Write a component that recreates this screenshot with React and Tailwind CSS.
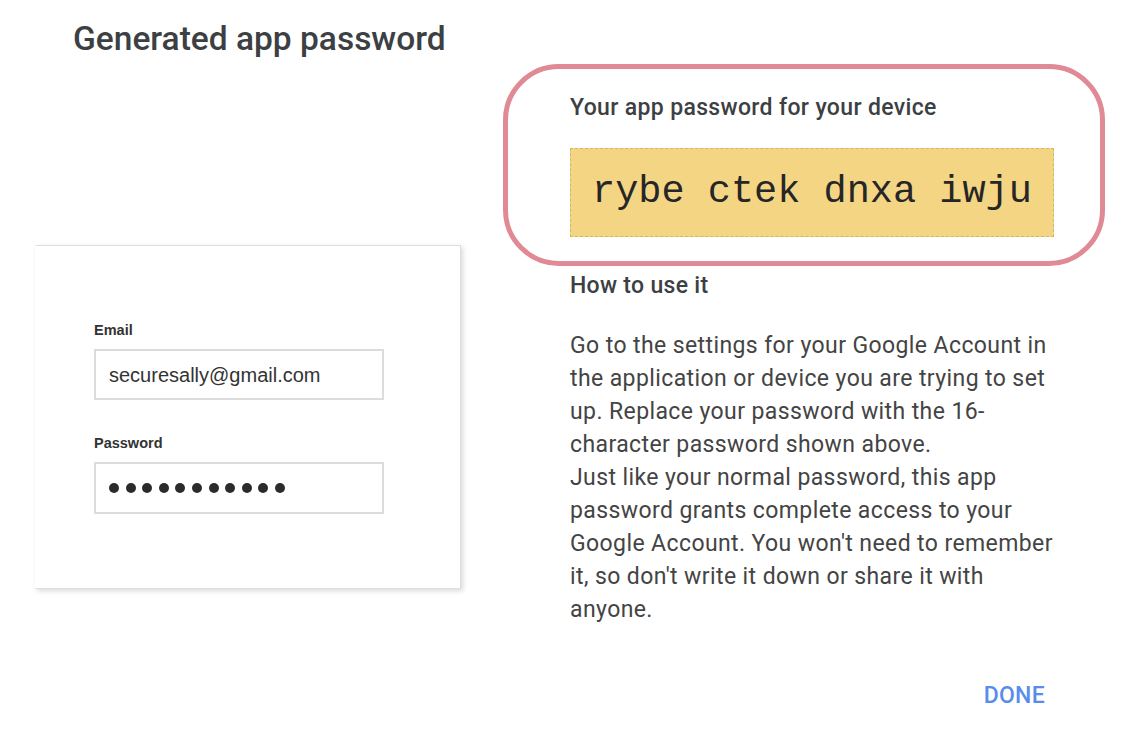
import React from 'react'

function Dots({ count }) {
  return (
    <div className="flex items-center gap-[6.6px]">
      {Array.from({ length: count }).map((_, i) => (
        <span key={i} className="block w-[10px] h-[10px] rounded-full bg-[#2b2b2b]" />
      ))}
    </div>
  )
}

export default function App() {
  return (
    <div className="w-[1132px] h-[734px] overflow-hidden bg-white pt-[19px] font-['Roboto',sans-serif] text-[#3c4043]">
      <h1 className="ml-[73px] text-[33.5px] leading-[40px] font-medium">
        Generated app password
      </h1>

      <div className="flex mt-[5px]">
        {/* sample sign-in card */}
        <div className="ml-[35px] mt-[181px] w-[426px] h-[344px] bg-white border border-[#dedede] border-l-transparent shadow-[2px_2px_5px_rgba(0,0,0,0.15)] pt-[75px] pl-[58px] font-['Liberation_Sans',Arial,sans-serif] text-[#333]">
          <div className="text-[14.5px] leading-[18px] font-bold">Email</div>
          <div className="mt-[10px] w-[290px] h-[51px] border-2 border-[#dcdcdc] flex items-center pl-[13px] text-[20px]">
            securesally@gmail.com
          </div>
          <div className="mt-[34px] text-[14.5px] leading-[18px] font-bold">Password</div>
          <div className="mt-[10px] w-[290px] h-[52px] border-2 border-[#dcdcdc] flex items-center pl-[13px]">
            <Dots count={11} />
          </div>
        </div>

        {/* right column */}
        <div className="ml-[42px] w-[602px]">
          <div className="h-[202px] border-[5px] border-[#e08a95] rounded-[56px] pl-[62px] pt-[25px]">
            <div className="text-[23px] leading-[28px] font-medium tracking-[0.35px]">Your app password for your device</div>
            <div className="mt-[26px] w-[484px] h-[89px] bg-[#f4d584] border border-dashed border-[#d2b768] flex items-center justify-center font-['Liberation_Mono','Courier_New',monospace] text-[38.6px] text-[#262626]">
              rybe ctek dnxa iwju
            </div>
          </div>

          <div className="ml-[67px]">
            <div className="mt-[6px] text-[23px] leading-[28px] font-medium tracking-[0.3px]">How to use it</div>
            <p className="mt-[29px] w-[495px] text-[23px] leading-[33px] tracking-[0.4px] text-[#444]">
              Go to the settings for your Google Account in the application or device you are trying to set up. Replace your password with the 16-character password shown above.
              <br />
              Just like your normal password, this app password grants complete access to your Google Account. You won't need to remember it, so don't write it down or share it with anyone.
            </p>
          </div>

          <div className="mt-[56px] flex justify-end pr-[60px]">
            <span className="text-[23px] leading-[28px] font-medium text-[#5a8de9] tracking-[0.3px]">DONE</span>
          </div>
        </div>
      </div>
    </div>
  )
}
